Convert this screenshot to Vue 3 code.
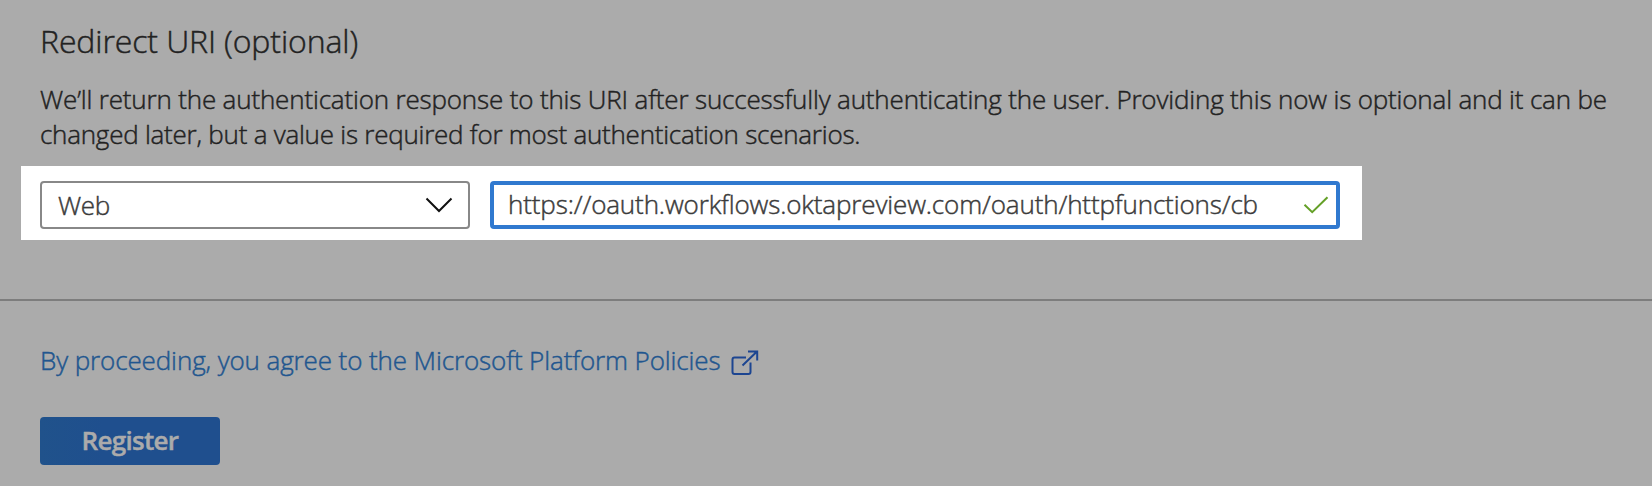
<script setup>
import { ref } from 'vue'

const platform = ref('Web')
const uri = ref('https://oauth.workflows.oktapreview.com/oauth/httpfunctions/cb')
</script>

<template>
  <main class="page">
    <section class="redirect">
      <h2><span>Redirect URI (optional)</span></h2>
      <p class="description">
        <span class="line first">We’ll return the authentication response to this URI after successfully authenticating the user. Providing this now is optional and it can be</span>
        <span class="line second">changed later, but a value is required for most authentication scenarios.</span>
      </p>
      <div class="highlight">
        <div class="select">
          <span class="platform">{{ platform }}</span>
          <svg class="chevron" width="28" height="16" viewBox="0 0 28 16">
            <path d="M1.5 1.5 L14 14 L26.500 1.500" />
          </svg>
        </div>
        <div class="field">
          <span class="uri">{{ uri }}</span>
          <svg class="check" width="26" height="18" viewBox="0 0 26 18">
            <path d="M1.500 8.700 L9.200 16.200 L24.500 1.200" />
          </svg>
        </div>
      </div>
    </section>
    <footer class="footer">
      <a class="policies">
        <span class="link">By proceeding, you agree to the Microsoft Platform Policies</span>
        <svg class="external" width="28" height="26" viewBox="0 0 28 26">
          <path d="M15 7.500 H3.500 Q1.500 7.500 1.500 9.500 V22 Q1.500 24 3.500 24 H17.500 Q19.500 24 19.500 22 V12.500" />
          <path d="M11.500 15.500 L26 1.500 M17 1.500 H26.200 V10.500" />
        </svg>
      </a>
      <button class="register" type="button"><span>Register</span></button>
    </footer>
  </main>
</template>

<style>
body {
  margin: 0;
  background: #ababab;
}
</style>

<style scoped>
.page {
  box-sizing: border-box;
  width: 1652px;
  height: 486px;
  overflow: hidden;
  background: #ababab;
  color: #222;
  font-family: "Open Sans", "Noto Sans", sans-serif;
  font-size: 26px;
  font-weight: 300;
  letter-spacing: -0.17px;
  -webkit-text-stroke: 0.45px currentColor;
}
.redirect {
  box-sizing: border-box;
  height: 301px;
  padding-top: 19px;
  border-bottom: 2px solid #7d7d7d;
}
h2 {
  margin: 0 0 0 40px;
  font-size: 32px;
  font-weight: 300;
  line-height: 44px;
  letter-spacing: -0.11px;
  white-space: nowrap;
}
.description {
  margin: 19px 0 0 40px;
  height: 84px;
  line-height: 35px;
}
.line {
  display: block;
  white-space: nowrap;
}
.second {
  letter-spacing: -0.24px;
}
.highlight {
  box-sizing: border-box;
  display: flex;
  gap: 20px;
  width: 1341px;
  height: 74px;
  margin-left: 21px;
  padding: 15px 22px 11px 19px;
  background: #fff;
}
.select,
.field {
  box-sizing: border-box;
  display: flex;
  align-items: center;
  justify-content: space-between;
  height: 48px;
  border-radius: 4px;
  color: #3b3b3b;
  white-space: nowrap;
}
.select {
  width: 430px;
  padding: 0 15px 0 16px;
  border: 2px solid #888;
}
.field {
  width: 850px;
  padding: 0 7px 0 14px;
  border: 4px solid #3079cf;
}
.platform {
  letter-spacing: -0.4px;
}
.uri {
  padding-bottom: 2px;
  letter-spacing: -0.14px;
}
svg {
  display: block;
  flex: none;
  fill: none;
  stroke-width: 2;
}
.chevron {
  stroke: #111;
}
.check {
  stroke: #64a027;
}
.footer {
  padding: 41px 0 0 40px;
}
.policies {
  display: flex;
  align-items: center;
  gap: 10px;
  height: 36px;
  color: #21568f;
  letter-spacing: -0.11px;
  white-space: nowrap;
}
.external {
  margin-top: 6px;
  stroke: #1c4591;
}
.register {
  display: flex;
  align-items: center;
  justify-content: center;
  width: 180px;
  height: 48px;
  margin: 39px 0 0;
  padding: 0 0 2px;
  border: 0;
  border-radius: 4px;
  background: linear-gradient(90deg, #20528b, #1f4f8e 35%);
  color: #ababab;
  font: 600 26px "Open Sans", "Noto Sans", sans-serif;
  letter-spacing: -0.7px;
}
</style>
